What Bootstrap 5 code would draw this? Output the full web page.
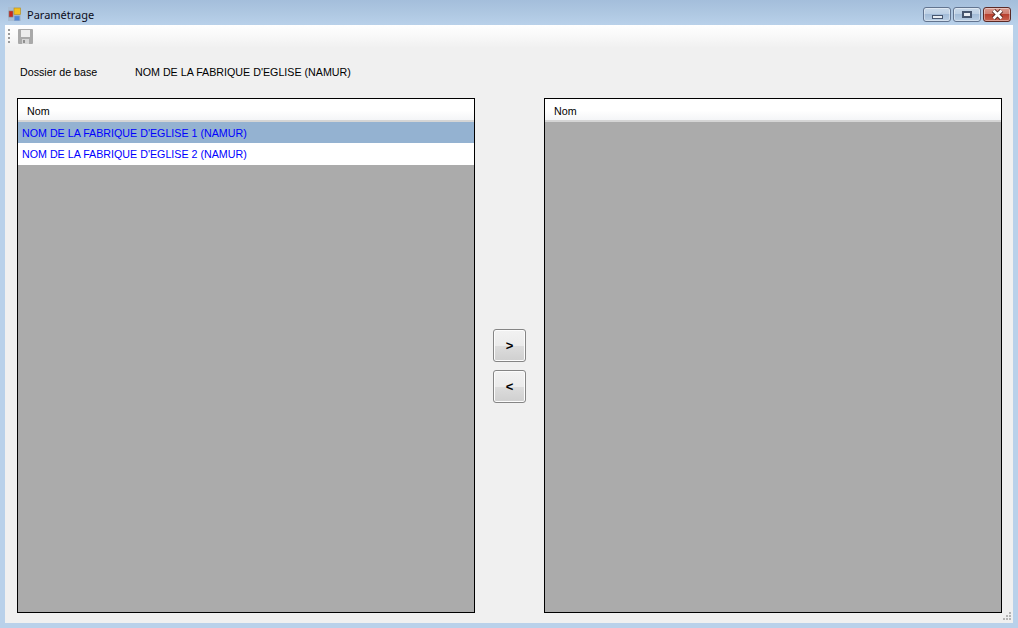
<!DOCTYPE html>
<html lang="fr">
  <head>
    <meta charset="UTF-8" />
    <title>Paramétrage</title>
    <link href="https://cdn.jsdelivr.net/npm/bootstrap@5.3.0/dist/css/bootstrap.min.css" rel="stylesheet" />
    <style>
      html, body { height: 100%; }
      body {
        width: 1018px;
        height: 628px;
        overflow: hidden;
        background: #b9d1ea;
        font-family: "Liberation Sans", Arial, sans-serif;
        font-size: 10.7px;
        color: #000;
      }
      .win-title {
        height: 25px;
        padding: 7px 7px 0 8px;
        background: linear-gradient(180deg, #a4bedb 0%, #b0c9e3 60%, #b9d1ea 100%);
      }
      .win-caption {
        font-family: "Noto Sans", "Open Sans", sans-serif;
        font-size: 11px;
        line-height: 16px;
        margin-left: 6px;
        color: #0c0c20;
      }
      .win-ctls { gap: 2px; }
      .ctl-box {
        width: 28px;
        height: 15px;
        border: 1px solid #62748f;
        border-radius: 3px;
        background: linear-gradient(180deg, #c9d9ea 0%, #bdd0e5 45%, #a3bcd8 50%, #b9cee4 100%);
        box-shadow: inset 0 0 0 1px rgba(255,255,255,.4);
      }
      .ctl-close {
        border-color: #5b2a26;
        background: linear-gradient(180deg, #d99a8f 0%, #cf7e71 45%, #b8402f 50%, #c9614e 100%);
      }
      .ctl-min-glyph { width: 11px; height: 4px; margin-top: 7px; background: #e8edf3; border: 1px solid #46566f; }
      .ctl-max-glyph { width: 10px; height: 7px; border: 2px solid #46566f; background: #e8edf3; }
      .win-client {
        height: 598px;
        margin: 0 5px;
        background: #f0f0f0;
      }
      .tool-strip {
        height: 23px;
        padding-left: 3px;
        background: linear-gradient(180deg, #ffffff 0%, #f8f8f8 50%, #f0f0f0 100%);
      }
      .grip-dots {
        width: 2px;
        height: 15px;
        margin-top: 4px;
        background: repeating-linear-gradient(180deg, #9a9a9a 0 2px, transparent 2px 4px);
      }
      .base-row {
        height: 50px;
        padding: 0 0 2px 15px;
      }
      .base-label { width: 115px; }
      .panes-row { padding-left: 12px; }
      .list-pane {
        width: 458px;
        height: 515px;
        border: 1px solid #000;
        background: #ababab;
      }
      .list-head {
        height: 23px;
        line-height: 24px;
        padding-left: 9px;
        background: linear-gradient(180deg, #ffffff 0%, #ffffff 55%, #f4f5f7 100%);
        border-bottom: 2px solid #d5d5d5;
      }
      .list-row {
        height: 22px;
        line-height: 23px;
        padding-left: 4px;
        color: #0000ff;
        background: #fff;
      }
      .list-row-sel { height: 21px; line-height: 22px; background: #94b2d1; }
      .move-col { width: 69px; padding-top: 20px; }
      .move-btn {
        width: 33px;
        height: 33px;
        padding: 0;
        border: 1px solid #858585;
        border-radius: 3px;
        background: linear-gradient(180deg, #f2f2f2 0%, #ebebeb 50%, #dddddd 50%, #cfcfcf 100%);
        box-shadow: inset 0 0 0 1px #fcfcfc;
        font-family: "Liberation Sans", Arial, sans-serif;
        font-size: 13px;
        font-weight: 700;
        line-height: 1;
        color: #000;
      }
      .size-grip { right: 1px; bottom: 1px; }
    </style>
  </head>
  <body>
    <div class="win-title d-flex align-items-start">
      <svg width="13" height="14" viewBox="0 0 13 14">
        <rect x="0" y="0" width="13" height="14" fill="#a9bdd3" />
        <rect x="1" y="4" width="4" height="6" fill="#c8281e" stroke="#7d7d7d" stroke-width=".6" />
        <rect x="6" y="1" width="6.500" height="6.500" fill="#f4c020" stroke="#b08a20" stroke-width=".6" />
        <rect x="6.500" y="9" width="5" height="4.500" fill="#4f86d8" stroke="#7a9ac8" stroke-width=".6" />
      </svg>
      <span class="win-caption">Paramétrage</span>
      <div class="ms-auto d-flex win-ctls">
        <div class="ctl-box d-flex justify-content-center"><div class="ctl-min-glyph"></div></div>
        <div class="ctl-box d-flex justify-content-center align-items-center"><div class="ctl-max-glyph"></div></div>
        <div class="ctl-box ctl-close d-flex justify-content-center align-items-center">
          <svg width="13" height="11" viewBox="0 0 13 11"><path d="M2.500 1.500l8 8M10.500 1.500l-8 8" stroke="#4a1f1a" stroke-width="4.400" /><path d="M2.500 1.500l8 8M10.500 1.500l-8 8" stroke="#fff" stroke-width="2.600" /></svg>
        </div>
      </div>
    </div>

    <div class="win-client position-relative">
      <div class="tool-strip d-flex align-items-start gap-2">
        <div class="grip-dots"></div>
        <svg class="mt-1" width="15" height="15" viewBox="0 0 15 15">
          <rect x="0" y="0" width="15" height="15" rx="1" fill="#a9a9a9" />
          <rect x="3" y="1" width="9" height="7" fill="#ececec" />
          <rect x="4" y="10" width="7" height="5" fill="#d6d6d6" />
          <rect x="5" y="11" width="2" height="3" fill="#8f8f8f" />
        </svg>
      </div>

      <div class="base-row d-flex align-items-center">
        <span class="base-label">Dossier de base</span>
        <span>NOM DE LA FABRIQUE D'EGLISE (NAMUR)</span>
      </div>

      <div class="panes-row d-flex">
        <div class="list-pane">
          <div class="list-head">Nom</div>
          <div class="list-row list-row-sel">NOM DE LA FABRIQUE D'EGLISE 1 (NAMUR)</div>
          <div class="list-row">NOM DE LA FABRIQUE D'EGLISE 2 (NAMUR)</div>
        </div>
        <div class="move-col d-flex flex-column align-items-center justify-content-center gap-2">
          <button type="button" class="btn move-btn">&gt;</button>
          <button type="button" class="btn move-btn">&lt;</button>
        </div>
        <div class="list-pane">
          <div class="list-head">Nom</div>
        </div>
      </div>

      <svg class="size-grip position-absolute" width="10" height="10" viewBox="0 0 10 10" fill="#b4b4b4">
        <rect x="7" y="0" width="2" height="2" /><rect x="4" y="3" width="2" height="2" /><rect x="7" y="3" width="2" height="2" />
        <rect x="1" y="6" width="2" height="2" /><rect x="4" y="6" width="2" height="2" /><rect x="7" y="6" width="2" height="2" />
      </svg>
    </div>

    <script src="https://cdn.jsdelivr.net/npm/bootstrap@5.3.0/dist/js/bootstrap.bundle.min.js"></script>
  </body>
</html>
